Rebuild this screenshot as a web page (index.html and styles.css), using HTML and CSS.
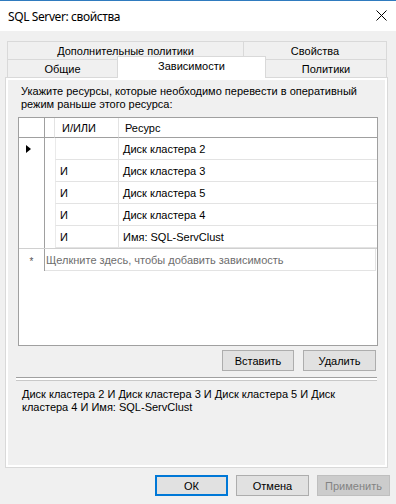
FILE: index.html
```html
<!DOCTYPE html>
<html lang="ru">
<head>
<meta charset="utf-8">
<title>SQL Server: свойства</title>
<link rel="stylesheet" href="styles.css">
</head>
<body>
<div class="window">
  <div class="titlebar">
    <span class="title">SQL Server: свойства</span>
    <svg class="close" width="11" height="11" viewBox="0 0 11 11"><path d="M0.5 0.5 L10.5 10.5 M10.5 0.5 L0.5 10.5" stroke="#000" stroke-width="1" fill="none"/></svg>
  </div>
  <div class="tabs">
    <div class="tabrow">
      <div class="tab w236">Дополнительные политики</div>
      <div class="tab grow">Свойства</div>
    </div>
    <div class="tabrow">
      <div class="tab w110">Общие</div>
      <div class="tab w148 active">Зависимости</div>
      <div class="tab grow">Политики</div>
    </div>
  </div>
  <div class="panel">
    <div class="page">
      <p class="desc">Укажите ресурсы, которые необходимо перевести в оперативный режим раньше этого ресурса:</p>
      <div class="grid">
        <div class="hrow">
          <div class="c rh"></div>
          <div class="c gap"></div>
          <div class="c op">И/ИЛИ</div>
          <div class="c res">Ресурс</div>
        </div>
        <div class="drow">
          <div class="c rh"><span class="arrow"></span></div>
          <div class="c gap"></div>
          <div class="c op"></div>
          <div class="c res">Диск кластера 2</div>
        </div>
        <div class="drow">
          <div class="c rh"></div>
          <div class="c gap"></div>
          <div class="c op">И</div>
          <div class="c res">Диск кластера 3</div>
        </div>
        <div class="drow">
          <div class="c rh"></div>
          <div class="c gap"></div>
          <div class="c op">И</div>
          <div class="c res">Диск кластера 5</div>
        </div>
        <div class="drow">
          <div class="c rh"></div>
          <div class="c gap"></div>
          <div class="c op">И</div>
          <div class="c res">Диск кластера 4</div>
        </div>
        <div class="drow">
          <div class="c rh"></div>
          <div class="c gap"></div>
          <div class="c op">И</div>
          <div class="c res">Имя: SQL-ServClust</div>
        </div>
        <div class="nrow">
          <div class="c rh star">*</div>
          <div class="c newcell">Щелкните здесь, чтобы добавить зависимость</div>
        </div>
      </div>
      <div class="gridbtns">
        <button class="btn w72">Вставить</button>
        <button class="btn w73">Удалить</button>
      </div>
      <div class="sep"></div>
      <p class="expr">Диск кластера 2 И Диск кластера 3 И Диск кластера 5 И Диск кластера 4 И Имя: SQL-ServClust</p>
    </div>
  </div>
  <div class="footer">
    <button class="btn w73 default">ОК</button>
    <button class="btn w73">Отмена</button>
    <button class="btn w73 disabled">Применить</button>
  </div>
</div>
</body>
</html>
```

FILE: styles.css
```css
* { box-sizing: border-box; }
html, body { margin: 0; padding: 0; }
body {
  width: 396px;
  height: 504px;
  background: #f0f0f0;
  font-family: "Liberation Sans", Arial, sans-serif;
  font-size: 11px;
  color: #000;
  overflow: hidden;
}
.window { display: flex; flex-direction: column; height: 504px; }
.titlebar {
  height: 31px;
  background: #fff;
  border-top: 1px solid #2f7bbf;
  display: flex;
  align-items: center;
  justify-content: space-between;
  padding: 0 9px 0 8px;
}
.title { font-family: "Noto Sans", sans-serif; font-size: 12px; letter-spacing: -0.4px; }
.close { display: block; margin-top: -1px; }

.tabs { margin: 10px 9px 0 7px; display: flex; flex-direction: column; }
.tabrow { display: flex; height: 18px; }
.tab {
  background: #f0f0f0;
  border: 1px solid #d9d9d9;
  border-bottom: none;
  margin-right: -1px;
  display: flex;
  align-items: center;
  justify-content: center;
  font-size: 11px;
  padding-top: 1px;
}
.tab.grow { flex: 1; margin-right: 0; }
.w236 { width: 237px; }
.w110 { width: 111px; }
.w148 { width: 149px; }
.tab.active {
  background: #fff;
  margin-top: -3px;
  height: 22px;
  padding-top: 0;
  padding-bottom: 3px;
  position: relative;
  z-index: 1;
}

.panel {
  margin: 0 8px 0 5px;
  height: 391px;
  border: 1px solid #d9d9d9;
  background: #fff;
  padding: 2px;
}
.page {
  background: #f0f0f0;
  height: 100%;
  padding: 5px 7px 0 10px;
  display: flex;
  flex-direction: column;
}
.desc { margin: 0 0 6px 3px; line-height: 13px; }

.grid {
  height: 229px;
  background: #fff;
  border: 1px solid #a0a0a0;
  display: flex;
  flex-direction: column;
}
.hrow, .drow, .nrow { display: flex; }
.hrow { height: 20px; }
.drow, .nrow { height: 22px; }
.c { display: flex; align-items: center; }
.rh { width: 26px; border-right: 1px solid #a0a0a0; justify-content: center; }
.gap { width: 10px; }
.op { width: 64px; padding-left: 4px; }
.res { flex: 1; padding-left: 4px; }
.hrow .c { border-bottom: 1px solid #a0a0a0; }
.hrow .gap, .hrow .op { border-right: 1px solid #e3e3e3; }
.hrow .op { padding-left: 7px; }
.hrow .res { padding-left: 6px; }
.drow .op { border-left: 1px solid #eaeaea; border-right: 1px solid #e3e3e3; border-bottom: 1px solid #e3e3e3; }
.drow .res { border-bottom: 1px solid #e3e3e3; }
.arrow {
  width: 0; height: 0;
  border-top: 4px solid transparent;
  border-bottom: 4px solid transparent;
  border-left: 5px solid #000;
  margin-left: -6px;
}
.nrow { border-top: 1px solid #d0d0d0; height: 23px; }
.star { font-size: 10px; color: #555; padding-top: 3px; }
.newcell {
  flex: 1;
  color: #6d6d6d;
  padding-left: 1px;
  border: 1px solid #e3e3e3;
  border-left: none;
  border-top: none;
  margin-right: 1px;
}

.btn {
  height: 21px;
  background: #e1e1e1;
  border: 1px solid #adadad;
  font-family: "Liberation Sans", Arial, sans-serif;
  font-size: 11px;
  color: #000;
  padding: 0;
}
.w72 { width: 72px; }
.w73 { width: 73px; }
.gridbtns { display: flex; justify-content: flex-end; gap: 9px; margin: 4px 2px 0 0; }
.sep {
  margin: 6px 1px 0 -2px;
  height: 4px;
  border-top: 1px solid #a0a0a0;
  border-bottom: 1px solid #c8c8c8;
  background: #fff;
}
.expr { margin: 7px 0 0 4px; line-height: 13px; }

.footer { display: flex; justify-content: flex-end; gap: 8px; margin: 7px 6px 0 0; }
.btn.default { border: 2px solid #0078d7; }
.btn.disabled { background: #cccccc; border-color: #bfbfbf; color: #838383; }
```
